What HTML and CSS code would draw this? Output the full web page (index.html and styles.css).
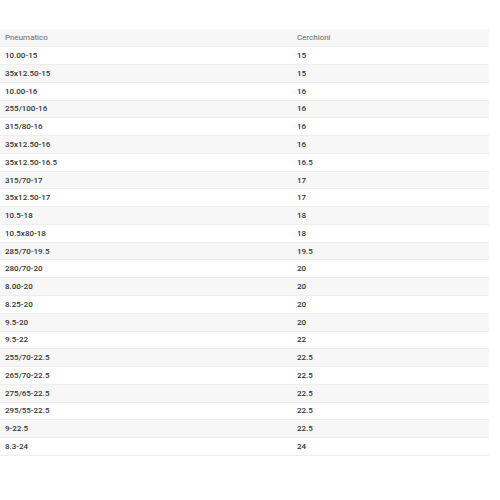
FILE: index.html
```html
<!DOCTYPE html>
<html>
<head>
<meta charset="utf-8">
<link rel="stylesheet" href="styles.css">
</head>
<body>
<table class="sizes">
<thead>
<tr><th>Pneumatico</th><th>Cerchioni</th></tr>
</thead>
<tbody>
<tr><td>10.00-15</td><td>15</td></tr>
<tr><td>35x12.50-15</td><td>15</td></tr>
<tr><td>10.00-16</td><td>16</td></tr>
<tr><td>255/100-16</td><td>16</td></tr>
<tr><td>315/80-16</td><td>16</td></tr>
<tr><td>35x12.50-16</td><td>16</td></tr>
<tr><td>35x12.50-16.5</td><td>16.5</td></tr>
<tr><td>315/70-17</td><td>17</td></tr>
<tr><td>35x12.50-17</td><td>17</td></tr>
<tr><td>10.5-18</td><td>18</td></tr>
<tr><td>10.5x80-18</td><td>18</td></tr>
<tr><td>285/70-19.5</td><td>19.5</td></tr>
<tr><td>280/70-20</td><td>20</td></tr>
<tr><td>8.00-20</td><td>20</td></tr>
<tr><td>8.25-20</td><td>20</td></tr>
<tr><td>9.5-20</td><td>20</td></tr>
<tr><td>9.5-22</td><td>22</td></tr>
<tr><td>255/70-22.5</td><td>22.5</td></tr>
<tr><td>265/70-22.5</td><td>22.5</td></tr>
<tr><td>275/65-22.5</td><td>22.5</td></tr>
<tr><td>295/55-22.5</td><td>22.5</td></tr>
<tr><td>9-22.5</td><td>22.5</td></tr>
<tr><td>8.3-24</td><td>24</td></tr>
</tbody>
</table>
</body>
</html>
```
FILE: styles.css
```css
html, body {
  margin: 0;
  padding: 0;
  background: #ffffff;
}
body {
  padding-top: 29px;
  font-family: Roboto, "Liberation Sans", sans-serif;
}
.sizes {
  width: 489px;
  border-collapse: collapse;
  font-size: 8px;
  color: #333333;
}
.sizes th,
.sizes td {
  height: 17.78px;
  padding: 0 5px;
  text-align: left;
  vertical-align: middle;
  border-bottom: 1px solid #eeeeee;
  box-sizing: border-box;
}
.sizes th {
  font-weight: 400;
  color: #666666;
  background: #f7f7f7;
}
.sizes td {
  font-weight: 500;
}
.sizes th:first-child,
.sizes td:first-child {
  width: 292px;
}
.sizes tbody tr:nth-child(even) {
  background: #f7f7f7;
}
```
